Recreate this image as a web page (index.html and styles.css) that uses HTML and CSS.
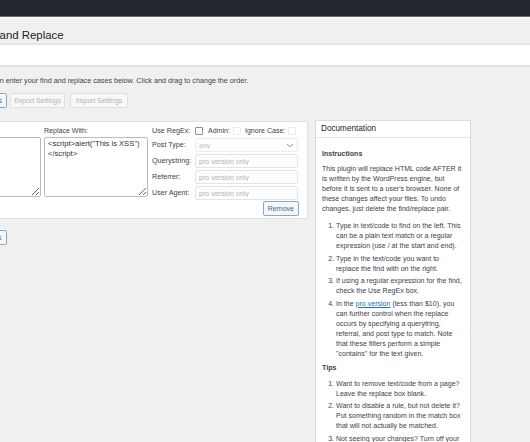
FILE: index.html
```html
<!DOCTYPE html>
<html lang="en">
<head>
<meta charset="utf-8">
<title>Real-Time Find and Replace</title>
<link rel="stylesheet" href="styles.css">
</head>
<body>
<div class="adminbar"></div>
<header class="page-header">
  <h1 class="page-title">Real-Time Find and Replace</h1>
</header>
<div class="subbar"></div>
<main class="wrap">
  <p class="intro">You can enter your find and replace cases below. Click and drag to change the order.</p>
  <div class="toolbar">
    <button class="btn btn-first">Update Settings</button>
    <button class="btn btn-tool" disabled>Export Settings</button>
    <button class="btn btn-tool btn-import" disabled>Import Settings</button>
  </div>
  <div class="main">
    <div class="rules">
      <div class="rule-card">
        <div class="col">
          <label class="col-label">Find:</label>
          <textarea class="code"></textarea>
        </div>
        <div class="col">
          <label class="col-label">Replace With:</label>
          <textarea class="code">&lt;script&gt;alert("This is XSS")
&lt;/script&gt;</textarea>
        </div>
        <div class="opts">
          <span class="lbl">Use RegEx:</span>
          <div class="checks">
            <input type="checkbox" class="cb">
            <span class="check-label">Admin:</span>
            <input type="checkbox" class="cb cb-off" disabled>
            <span class="check-label">Ignore Case:</span>
            <input type="checkbox" class="cb cb-off" disabled>
          </div>
          <span class="lbl">Post Type:</span>
          <div class="select-wrap">
            <select class="field" disabled><option>any</option></select>
            <svg class="chev" width="8" height="5" viewBox="0 0 8 5"><path d="M1 1l3 3 3-3" fill="none" stroke="#9a9da1" stroke-width="1"/></svg>
          </div>
          <span class="lbl">Querystring:</span>
          <input class="field" type="text" disabled placeholder="pro version only">
          <span class="lbl">Referrer:</span>
          <input class="field" type="text" disabled placeholder="pro version only">
          <span class="lbl">User Agent:</span>
          <input class="field" type="text" disabled placeholder="pro version only">
          <div class="remove-row"><button class="btn">Remove</button></div>
        </div>
      </div>
      <div class="add-row"><button class="btn btn-add">Add Rules</button></div>
    </div>
    <aside class="doc">
      <h2 class="doc-head">Documentation</h2>
      <div class="doc-body">
        <h3 class="doc-title">Instructions</h3>
        <p class="doc-text">This plugin will replace HTML code AFTER it is written by the WordPress engine, but before it is sent to a user's browser. None of these changes affect your files. To undo changes, just delete the find/replace pair.</p>
        <ol class="doc-list">
          <li>Type in text/code to find on the left. This can be a plain text match or a regular expression (use / at the start and end).</li>
          <li>Type in the text/code you want to replace the find with on the right.</li>
          <li>If using a regular expression for the find, check the Use RegEx box.</li>
          <li>In the <a href="#" class="link">pro version</a> (less than $10), you can further control when the replace occurs by specifying a querytring, referral, and post type to match. Note that these filters perform a simple "contains" for the text given.</li>
        </ol>
        <h3 class="doc-title tips">Tips</h3>
        <ol class="doc-list tips-list">
          <li>Want to remove text/code from a page? Leave the replace box blank.</li>
          <li>Want to disable a rule, but not delete it? Put something random in the match box that will not actually be matched.</li>
          <li>Not seeing your changes? Turn off your caching plugins.</li>
        </ol>
      </div>
    </aside>
  </div>
</main>
</body>
</html>
```
FILE: styles.css
```css
* { box-sizing: border-box; }
html, body { margin: 0; padding: 0; }
body {
  width: 530px;
  height: 442px;
  overflow: hidden;
  background: #f0f0f1;
  font-family: "Liberation Sans", Arial, sans-serif;
  font-size: 7.05px;
  line-height: 10px;
  color: #3c434a;
}
.adminbar {
  height: 17px;
  background: #23262d;
  border-bottom: 1px solid #6a6d72;
}
.page-header {
  height: 28px;
  background: #f0f0f1;
  border-top: 2px solid #f8f8f8;
  border-bottom: 2px solid #e3e3e4;
  padding-top: 9px;
}
.page-title {
  margin: 0 0 0 -81px;
  font-size: 11.4px;
  line-height: 14px;
  font-weight: 400;
  color: #1d2327;
  white-space: nowrap;
}
.subbar {
  height: 22px;
  background: #fff;
  border-bottom: 2px solid #e1e1e2;
}
.wrap { padding-top: 9px; }
.intro {
  margin: 0 0 0 -22px;
  white-space: nowrap;
  font-size: 7.2px;
  color: #3c434a;
}
.toolbar {
  display: flex;
  gap: 3px;
  margin-top: 7px;
}
.btn {
  height: 15px;
  padding: 0 4px;
  font-family: inherit;
  font-size: 7.05px;
  line-height: 13px;
  border: 1px solid #86a9cb;
  border-radius: 2px;
  background: #f6f7f7;
  color: #3d6a96;
  white-space: nowrap;
}
.btn:disabled {
  color: #b4b6b9;
  border-color: #dedfe0;
  background: #f6f7f7;
}
.btn-tool { padding: 0 3px; font-size: 6.9px; }
.btn-import { margin-left: 2px; padding: 0 5px; }
.btn-first { margin-left: -53px; }
.main {
  display: flex;
  align-items: flex-start;
  margin-top: 12px;
}
.rules { flex: none; }
.rule-card {
  display: flex;
  margin: 1px 0 0 -73px;
  padding: 4px 8px 2px 9px;
  background: #fff;
  border: 1px solid #e0e0e1;
}
.col {
  display: flex;
  flex-direction: column;
  width: 104px;
  margin-right: 3px;
}
.col + .col { margin-right: 4px; }
.col-label {
  height: 10px;
  margin-bottom: 1px;
  white-space: nowrap;
}
.code {
  width: 104px;
  height: 60px;
  margin: 0;
  padding: 1px 3px;
  border: 1px solid #b9bbbe;
  border-radius: 2px;
  font-family: inherit;
  font-size: 7.6px;
  line-height: 10px;
  color: #2c3338;
  background: #fff;
}
.opts {
  width: 147px;
  display: grid;
  grid-template-columns: 43px 104px;
  row-gap: 2px;
  align-items: center;
}
.lbl { white-space: nowrap; font-size: 7.2px; }
.checks {
  display: flex;
  align-items: center;
  height: 10px;
  white-space: nowrap;
}
.cb {
  -webkit-appearance: none;
  appearance: none;
  width: 8px;
  height: 8px;
  margin: 0;
  border: 1px solid #8c8f94;
  border-radius: 1px;
  background: #fff;
  flex: none;
}
.cb-off { border-color: #ececed; margin-left: 3px; }
.check-label { margin-left: 5px; }
.cb-off + .check-label { margin-left: 4px; }
.field {
  width: 103px;
  height: 14px;
  margin: 0;
  padding: 0 3px;
  border: 1px solid #e2e3e4;
  border-radius: 2px;
  background: #fdfdfd;
  font-family: inherit;
  font-size: 7.05px;
  color: #a7aaad;
}
.field::placeholder { color: #b0b3b6; }
select.field {
  -webkit-appearance: none;
  appearance: none;
  display: block;
}
.select-wrap { position: relative; height: 14px; }
.chev { position: absolute; right: 5px; top: 5px; }
.remove-row {
  grid-column: 1 / 3;
  display: flex;
  justify-content: flex-end;
  margin-top: -1px;
}
.add-row { margin-top: 11px; }
.btn-add { margin-left: -36px; }
.doc {
  width: 156px;
  margin-left: 7px;
  background: #fff;
  border: 1px solid #dcdcde;
  height: 340px;
}
.doc-head {
  margin: 0;
  height: 17px;
  padding-left: 5px;
  border-bottom: 1px solid #e6e6e7;
  font-size: 8.2px;
  line-height: 16px;
  font-weight: 400;
  color: #1d2327;
}
.doc-body { padding: 0 6px; }
.doc-title {
  margin: 11px 0 0;
  font-size: 7.05px;
  line-height: 10px;
  font-weight: 700;
  color: #3c434a;
}
.doc-text { margin: 5px 0 0; }
.doc-list {
  margin: 7px 0 0;
  padding-left: 14px;
}
.doc-list li { margin-bottom: 2.5px; }
.link { color: #2271b1; text-decoration: underline; }
.tips { margin-top: 4px; }
.tips-list { margin-top: 6px; }
```
